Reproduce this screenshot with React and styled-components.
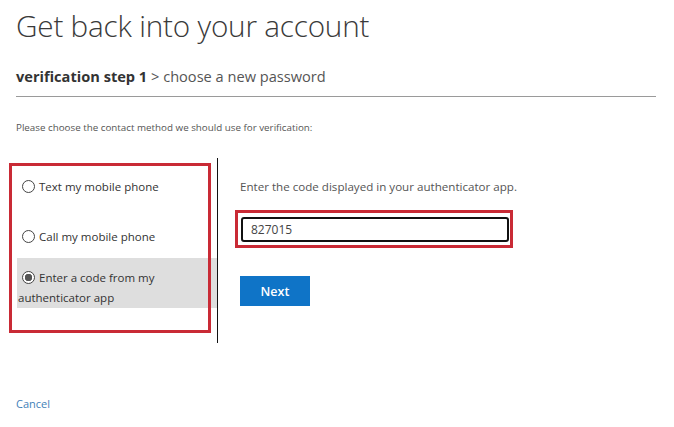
import styled, { createGlobalStyle } from "styled-components";

const GlobalStyle = createGlobalStyle`
  body {
    margin: 0;
    background: #fff;
    font-family: "Open Sans", "Noto Sans", sans-serif;
    color: #333;
  }
`;

const options = [
  { id: "text", label: "Text my mobile phone" },
  { id: "call", label: "Call my mobile phone" },
  { id: "app", label: "Enter a code from my authenticator app", checked: true },
];

const App = () => {
  return (
    <>
      <GlobalStyle />
      <Page>
        <Title>Get back into your account</Title>
        <Steps>
          <b>verification step 1</b> &gt; choose a new password
        </Steps>
        <Intro>Please choose the contact method we should use for verification:</Intro>
        <Columns>
          <MethodList>
            {options.map((o) => (
              <Method key={o.id} $checked={o.checked}>
                <Radio $checked={o.checked} />
                {o.label}
              </Method>
            ))}
            <Highlight />
          </MethodList>
          <CodePanel>
            <Hint>Enter the code displayed in your authenticator app.</Hint>
            <InputMark>
              <CodeInput defaultValue="827015" />
            </InputMark>
            <NextButton>Next</NextButton>
          </CodePanel>
        </Columns>
        <Cancel href="#">Cancel</Cancel>
      </Page>
    </>
  );
};

export default App;

const Page = styled.div`
  width: 674px;
  height: 427px;
  padding: 6px 18px 0 16px;
  box-sizing: border-box;
  overflow: hidden;
`;

const Title = styled.h1`
  margin: 0;
  font-weight: 300;
  font-size: 29.7px;
  line-height: 40px;
  color: #3a3a3a;
  letter-spacing: -0.2px;
`;

const Steps = styled.div`
  margin-top: 20px;
  padding-bottom: 10px;
  border-bottom: 1.5px solid #9a9a9a;
  font-size: 14.6px;
  line-height: 20px;
  color: #555;
  b {
    font-weight: 700;
    color: #333;
  }
`;

const Intro = styled.p`
  margin: 23px 0 0;
  font-size: 9.8px;
  line-height: 16px;
  color: #555;
`;

const Columns = styled.div`
  display: flex;
  margin-top: 22px;
`;

const MethodList = styled.div`
  position: relative;
  width: 202px;
  height: 185px;
  padding: 9px 0 0 1px;
  box-sizing: border-box;
  border-right: 1px solid #111;
  display: flex;
  flex-direction: column;
  gap: 10px;
`;

const Method = styled.div`
  padding: ${({ $checked }) => ($checked ? "10px 4px 0 1px" : "10px 4px 10px 1px")};
  margin-top: ${({ $checked }) => ($checked ? "-9px" : "0")};
  background: ${({ $checked }) => ($checked ? "#dedede" : "transparent")};
  font-size: 11.5px;
  line-height: 20px;
  color: #333;
`;

const Radio = styled.span`
  display: inline-block;
  vertical-align: -2px;
  width: 11px;
  height: 11px;
  margin: 0 4px 0 4px;
  border: 1px solid #444;
  border-radius: 50%;
  background: ${({ $checked }) =>
    $checked ? "radial-gradient(circle, #555 0 3.5px, #fff 4px)" : "#fff"};
`;

const Highlight = styled.div`
  position: absolute;
  left: -7px;
  top: 5px;
  width: 202px;
  height: 170px;
  border: 3px solid #c92a35;
  box-sizing: border-box;
  pointer-events: none;
`;

const CodePanel = styled.div`
  padding: 20px 0 0 22px;
`;

const Hint = styled.div`
  font-size: 11.6px;
  line-height: 18px;
  color: #555;
`;

const InputMark = styled.div`
  margin: 14px 0 0 -5px;
  width: 278px;
  padding: 4px 1px 3px 3px;
  border: 3px solid #c92a35;
  box-sizing: border-box;
`;

const CodeInput = styled.input`
  display: block;
  width: 268px;
  height: 25px;
  box-sizing: border-box;
  padding: 0 8px;
  border: 2px solid #111;
  border-radius: 3px;
  font-family: "Open Sans", "Noto Sans", sans-serif;
  font-size: 12px;
  color: #444;
  outline: none;
`;

const NextButton = styled.button`
  display: block;
  margin-top: 28px;
  width: 70px;
  height: 30px;
  border: none;
  background: #0f74c7;
  color: #fff;
  font-family: "Open Sans", "Noto Sans", sans-serif;
  font-weight: 600;
  font-size: 12.5px;
`;

const Cancel = styled.a`
  display: inline-block;
  margin-top: 53px;
  font-size: 11px;
  color: #3f7fb8;
  text-decoration: none;
`;
